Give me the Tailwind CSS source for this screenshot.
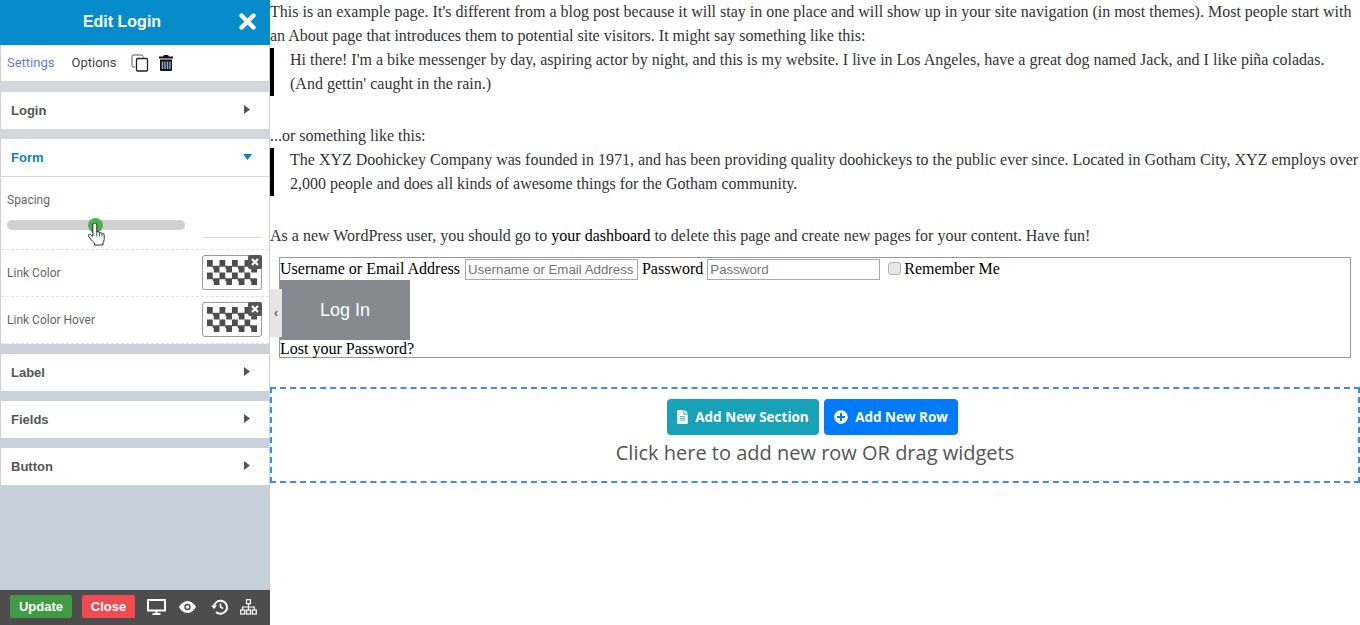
<!DOCTYPE html>
<html lang="en">
<head>
  <meta charset="UTF-8">
  <title>Edit Login</title>
  <script src="https://cdn.jsdelivr.net/npm/@tailwindcss/browser@4"></script>
</head>
<body class="bg-white overflow-hidden h-[625px] flex font-['Liberation_Serif',serif]">

  <!-- Sidebar -->
  <aside class="relative w-[270px] h-[625px] shrink-0 flex flex-col bg-gradient-to-b from-[#d8d9dc] to-[#c7cfd9] to-80% font-['Roboto',sans-serif]">
    <header class="h-[45px] shrink-0 bg-[#078ccb] flex items-center justify-center relative">
      <h1 class="text-white text-base font-bold pb-[2px] pr-[26px] font-['Liberation_Sans',sans-serif]">Edit Login</h1>
      <svg class="absolute left-[239px] top-[13px] w-[17px] h-[17px]" viewBox="0 0 17 17"><path d="M2.500 2.500l12 12M14.500 2.500l-12 12" stroke="#fff" stroke-width="4.400" stroke-linecap="round"/></svg>
    </header>

    <div class="h-[37px] shrink-0 bg-white border-x border-b border-[#d0d0d0] flex items-center text-[13px] pl-[6px]">
      <span class="text-[#5a7fe0]">Settings</span>
      <span class="text-[#444] ml-[17px]">Options</span>
      <svg class="ml-[15px] w-[18px] h-[18px]" viewBox="0 0 18 18" fill="none" stroke="#222"><path d="M12 3.500V2.500a1.500 1.500 0 0 0-1.500-1.500h-8A1.500 1.500 0 0 0 1 2.500v9A1.500 1.500 0 0 0 2.500 13H4" stroke="#555"/><rect x="5.500" y="4.500" width="11" height="12.500" rx="1" stroke-width="1.300"/></svg>
      <svg class="ml-[10px] w-[14px] h-[16px]" viewBox="0 0 14 16"><path d="M5 0h4l1 1.500h4V3.500H0V1.500h4z" fill="#111"/><path d="M1 4.500h12V15a1 1 0 0 1-1 1H2a1 1 0 0 1-1-1z" fill="#111"/><path d="M3.500 6.500v7.500M6 6.500v7.500M8.500 6.500v7.500M11 6.500v7.500" stroke="#8fb4d0" stroke-width="1.400"/></svg>
    </div>

    <div class="mt-[10px] h-[37px] shrink-0 bg-white border-x border-[#d0d0d0] flex items-center justify-between pl-[10px] pr-[19px] text-[13px] font-bold text-[#555] font-['Liberation_Sans',sans-serif]">
      <span>Login</span>
      <svg class="w-[6px] h-[9px] mb-[2px]" viewBox="0 0 6 9"><path d="M0 0l6 4.500L0 9z" fill="#555"/></svg>
    </div>

    <section class="mt-[10px] shrink-0 bg-white border-x border-[#d0d0d0]">
      <div class="h-[38px] border-b border-[#d5d5d5] flex items-center justify-between pl-[10px] pr-[17px] text-[13px] font-bold text-[#0a82bf] font-['Liberation_Sans',sans-serif]">
        <span>Form</span>
        <svg class="w-[9px] h-[6px] mb-[2px]" viewBox="0 0 9 6"><path d="M0 0h9L4.500 6z" fill="#0a82bf"/></svg>
      </div>
      <div class="relative h-[73px] border-b border-dashed border-[#e2e2e2] text-xs text-[#666] pl-[6px] pt-[15px]">
        <div>Spacing</div>
        <div class="mt-[12px] w-[178px] h-[10px] rounded-full bg-[#d0d0d0]"></div>
        <div class="absolute left-[87px] top-[41px] w-[15px] h-[15px] rounded-full bg-[#4caf50]"></div>
        <svg class="absolute left-[87px] top-[46px] w-[18px] h-[23px]" viewBox="0 0 18 23"><path d="M4.800 2a2 2 0 0 1 4 0v7c1-.6 2.300-.3 2.600.7 1-.5 2.300-.1 2.500.9 1-.3 2.200.2 2.300 1.400v4.500c0 1.500-.8 2.500-1.300 3.500v2H6.500v-2C4 18 2 15.500.5 13c-.6-1.200.8-2.300 2-1.500l2.300 2z" fill="#fff" stroke="#111" stroke-width=".9"/><path d="M8.800 9v4.500M11.400 10v3.500M13.900 11v2.500" stroke="#111" stroke-width=".7"/></svg>
        <div class="absolute left-[202px] top-[60px] w-[58px] h-px bg-[#d5d5d5]"></div>
      </div>
      <div class="h-[47px] border-b border-dashed border-[#e2e2e2] flex items-center justify-between pl-[6px] pr-[7px] text-xs text-[#666]">
        <span>Link Color</span>
        <div class="relative mb-[1px] w-[60px] h-[35px] rounded-[3px] border border-[#999] bg-white p-[4px]">
          <div class="h-[25px] w-[50px] bg-[repeating-conic-gradient(#fff_0_25%,#4d4d4d_0_50%)] bg-[length:12.5px_12.5px]"></div>
          <div class="absolute right-[-1px] top-[-1px] w-[14px] h-[14px] rounded-[2px] bg-[#555] flex items-center justify-center">
            <svg class="w-[8px] h-[8px]" viewBox="0 0 8 8"><path d="M1 1l6 6M7 1L1 7" stroke="#fff" stroke-width="2.200"/></svg>
          </div>
        </div>
      </div>
      <div class="h-[47px] flex items-center justify-between pl-[6px] pr-[7px] text-xs text-[#666] border-b border-dashed border-[#e2e2e2]">
        <span>Link Color Hover</span>
        <div class="relative mb-[1px] w-[60px] h-[35px] rounded-[3px] border border-[#999] bg-white p-[4px]">
          <div class="h-[25px] w-[50px] bg-[repeating-conic-gradient(#fff_0_25%,#4d4d4d_0_50%)] bg-[length:12.5px_12.5px]"></div>
          <div class="absolute right-[-1px] top-[-1px] w-[14px] h-[14px] rounded-[2px] bg-[#555] flex items-center justify-center">
            <svg class="w-[8px] h-[8px]" viewBox="0 0 8 8"><path d="M1 1l6 6M7 1L1 7" stroke="#fff" stroke-width="2.200"/></svg>
          </div>
        </div>
      </div>
    </section>

    <div class="mt-[10px] h-[37px] shrink-0 bg-white border-x border-[#d0d0d0] flex items-center justify-between pl-[10px] pr-[19px] text-[13px] font-bold text-[#555] font-['Liberation_Sans',sans-serif]">
      <span>Label</span>
      <svg class="w-[6px] h-[9px] mb-[2px]" viewBox="0 0 6 9"><path d="M0 0l6 4.500L0 9z" fill="#555"/></svg>
    </div>
    <div class="mt-[10px] h-[37px] shrink-0 bg-white border-x border-[#d0d0d0] flex items-center justify-between pl-[10px] pr-[19px] text-[13px] font-bold text-[#555] font-['Liberation_Sans',sans-serif]">
      <span>Fields</span>
      <svg class="w-[6px] h-[9px] mb-[2px]" viewBox="0 0 6 9"><path d="M0 0l6 4.500L0 9z" fill="#555"/></svg>
    </div>
    <div class="mt-[10px] h-[37px] shrink-0 bg-white border-x border-[#d0d0d0] flex items-center justify-between pl-[10px] pr-[19px] text-[13px] font-bold text-[#555] font-['Liberation_Sans',sans-serif]">
      <span>Button</span>
      <svg class="w-[6px] h-[9px] mb-[2px]" viewBox="0 0 6 9"><path d="M0 0l6 4.500L0 9z" fill="#555"/></svg>
    </div>

    <footer class="mt-auto h-[35px] shrink-0 bg-[#4d4d4d] flex items-center pl-[10px] pb-[2px] font-['Liberation_Sans',sans-serif]">
      <span class="w-[62px] h-[23px] rounded-[2px] bg-[#3f9c45] text-white text-[13px] font-bold flex items-center justify-center">Update</span>
      <span class="ml-[10px] w-[53px] h-[23px] rounded-[2px] bg-[#ef4b50] text-white text-[13px] font-bold flex items-center justify-center">Close</span>
      <svg class="ml-[12px] w-[19px] h-[16px]" viewBox="0 0 19 16" fill="none"><rect x="1" y="1" width="17" height="10.500" stroke="#fff" stroke-width="2"/><path d="M5.500 15h8M9.500 12v3" stroke="#fff" stroke-width="2"/></svg>
      <svg class="ml-[13px] w-[17px] h-[12px]" viewBox="0 0 17 12"><path d="M0 6c2-3.500 5-6 8.500-6S15 2.500 17 6c-2 3.500-5 6-8.500 6S2 9.500 0 6z" fill="#fff"/><circle cx="8.500" cy="6" r="3.200" fill="#4d4d4d"/><circle cx="8.500" cy="6" r="1.800" fill="#fff"/></svg>
      <svg class="ml-[15px] w-[17px] h-[16px]" viewBox="0 0 17 16" fill="none"><path d="M3 8a6.500 6.500 0 1 1 2 5" stroke="#fff" stroke-width="2"/><path d="M0 6.500h6L3 10z" fill="#fff"/><path d="M9.500 4.500V8l2.500 1.500" stroke="#fff" stroke-width="1.500"/></svg>
      <svg class="ml-[12px] w-[17px] h-[16px]" viewBox="0 0 17 16" fill="none" stroke="#fff" stroke-width="1.200"><rect x="6.500" y=".7" width="4" height="4"/><rect x=".7" y="11" width="4" height="4"/><rect x="6.500" y="11" width="4" height="4"/><rect x="12.300" y="11" width="4" height="4"/><path d="M8.500 5v6M2.700 11V8h11.600v3"/></svg>
    </footer>

    <!-- Collapse handle -->
    <div class="absolute left-[270px] top-[289px] w-[12px] h-[48px] bg-[#e6e6e6] flex items-center justify-center text-xs text-[#333] font-['Liberation_Sans',sans-serif]">‹</div>
  </aside>

  <!-- Page content -->
  <main class="flex-1 min-w-0 text-base leading-6 text-[#333]">
    <p>This is an example page. It's different from a blog post because it will stay in one place and will show up in your site navigation (in most themes). Most people start with an About page that introduces them to potential site visitors. It might say something like this:</p>
    <blockquote class="border-l-[4px] border-black pl-4">Hi there! I'm a bike messenger by day, aspiring actor by night, and this is my website. I live in Los Angeles, have a great dog named Jack, and I like piña coladas. (And gettin' caught in the rain.)</blockquote>
    <p class="mt-7">...or something like this:</p>
    <blockquote class="border-l-[4px] border-black pl-4">The XYZ Doohickey Company was founded in 1971, and has been providing quality doohickeys to the public ever since. Located in Gotham City, XYZ employs over 2,000 people and does all kinds of awesome things for the Gotham community.</blockquote>
    <p class="mt-7">As a new WordPress user, you should go to <span class="text-black">your dashboard</span> to delete this page and create new pages for your content. Have fun!</p>

    <form class="mx-[9px] mt-[9px] h-[101px] border border-[#999] text-black text-base leading-5">
      <div class="h-[22px] flex items-center">
        <span>Username or Email Address</span>
        <input class="ml-[5px] w-[173px] h-[21px] border border-[#aaa] px-[2px] text-[13.3px] font-['Liberation_Sans',sans-serif] placeholder:text-[#757575]" placeholder="Username or Email Address">
        <span class="ml-1">Password</span>
        <input class="ml-1 w-[173px] h-[21px] border border-[#aaa] px-[2px] text-[13.3px] font-['Liberation_Sans',sans-serif] placeholder:text-[#757575]" placeholder="Password">
        <input type="checkbox" class="ml-[8px] w-[13px] h-[13px] appearance-none bg-[#e8e8e8] border border-[#b0b0b0] rounded-[3px] mb-[2px]">
        <span class="ml-[3px]">Remember Me</span>
      </div>
      <button type="button" class="block w-[130px] h-[60px] bg-[#858a90] text-white text-lg font-['Liberation_Sans',sans-serif]">Log In</button>
      <div class="mt-[-1px]">Lost your Password?</div>
    </form>

    <section class="mt-[29px] h-[96px] border-2 border-dashed border-[#3d8bf2] flex flex-col items-center pt-[10px] font-['Open_Sans',sans-serif]">
      <div class="flex gap-[5px] pr-[5px]">
        <span class="w-[152px] h-[36px] rounded-[4px] bg-[#17a2b8] text-white text-[13.5px] font-bold flex items-center justify-center gap-[7px]">
          <svg class="w-[11px] h-[14px]" viewBox="0 0 384 512" fill="#fff"><path d="M224 136V0H24C10.700 0 0 10.700 0 24v464c0 13.300 10.700 24 24 24h336c13.300 0 24-10.700 24-24V160H248c-13.200 0-24-10.800-24-24zm64 236c0 6.600-5.400 12-12 12H108c-6.600 0-12-5.400-12-12v-8c0-6.600 5.400-12 12-12h168c6.600 0 12 5.400 12 12v8zm0-64c0 6.600-5.400 12-12 12H108c-6.600 0-12-5.400-12-12v-8c0-6.600 5.400-12 12-12h168c6.600 0 12 5.400 12 12v8zm0-72v8c0 6.600-5.400 12-12 12H108c-6.600 0-12-5.400-12-12v-8c0-6.600 5.400-12 12-12h168c6.600 0 12 5.400 12 12zm96-114.100v6.100H256V0h6.100c6.400 0 12.500 2.500 17 7l97.900 98c4.500 4.500 7 10.600 7 16.900z"/></svg>
          Add New Section
        </span>
        <span class="w-[134px] h-[36px] rounded-[4px] bg-[#007bff] text-white text-[13.5px] font-bold flex items-center justify-center gap-[7px]">
          <svg class="w-[14px] h-[14px]" viewBox="0 0 512 512" fill="#fff"><path d="M256 8C119 8 8 119 8 256s111 248 248 248 248-111 248-248S393 8 256 8zm144 276c0 6.600-5.400 12-12 12h-92v92c0 6.600-5.400 12-12 12h-56c-6.600 0-12-5.400-12-12v-92h-92c-6.600 0-12-5.400-12-12v-56c0-6.600 5.400-12 12-12h92v-92c0-6.600 5.400-12 12-12h56c6.600 0 12 5.400 12 12v92h92c6.600 0 12 5.400 12 12v56z"/></svg>
          Add New Row
        </span>
      </div>
      <div class="mt-[4px] text-xl leading-7 text-[#555]">Click here to add new row OR drag widgets</div>
    </section>
  </main>
</body>
</html>
